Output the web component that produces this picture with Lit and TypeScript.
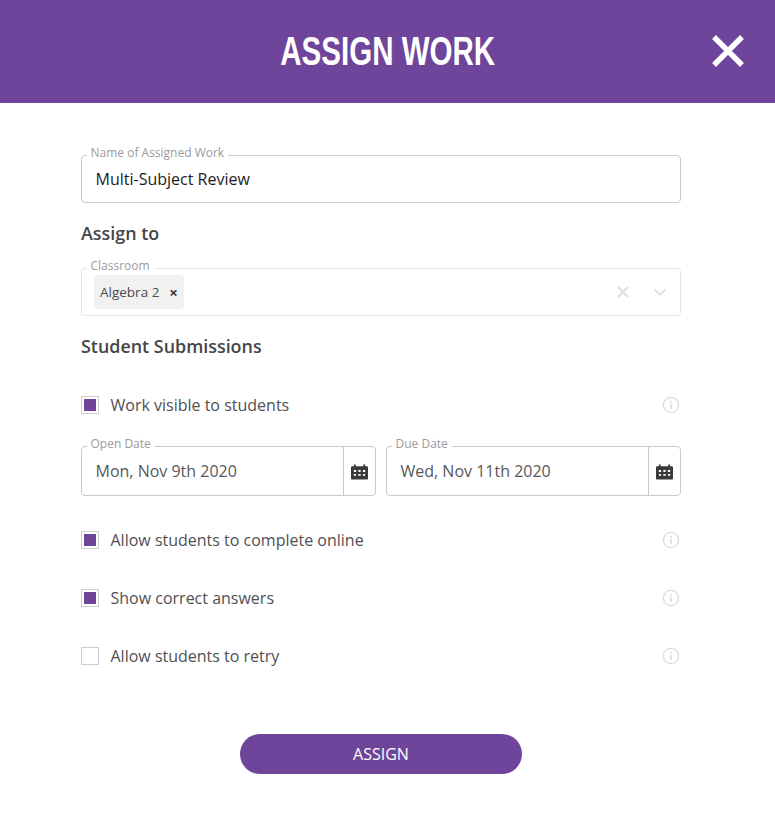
import { css, html, LitElement, svg } from 'lit'
import { customElement } from 'lit/decorators.js'

const closeIcon = svg`<path d="M2 2 L30 30 M30 2 L2 30" stroke="#fff" stroke-width="5.4" fill="none" />`

const infoIcon = html`<svg class="info" width="18" height="18" viewBox="0 0 18 18">
  <circle cx="9" cy="9" r="7.6" fill="none" stroke="#dcdcdc" stroke-width="1.3" />
  <rect x="8.2" y="8" width="1.6" height="5" fill="#dcdcdc" />
  <rect x="8.2" y="5" width="1.6" height="1.7" fill="#dcdcdc" />
</svg>`

const calendarIcon = html`<svg width="17" height="16" viewBox="0 0 18 16">
  <path
    fill="#3a3a3c"
    fill-rule="evenodd"
    d="M3 0h2v2h8V0h2v2h2a1 1 0 0 1 1 1v12a1 1 0 0 1-1 1H1a1 1 0 0 1-1-1V3a1 1 0 0 1 1-1h2V0zM3 6v2h2.4V6H3zm4.8 0v2h2.4V6H7.8zm4.8 0v2H15V6h-2.400zM3 10v2h2.400v-2H3zm4.800 0v2h2.400v-2H7.800zm4.800 0v2H15v-2h-2.400z"
  />
</svg>`

@customElement('app-root')
export class AppRoot extends LitElement {
  static styles = css`
    :host {
      display: block;
      min-height: 813px;
      background: #fff;
      font-family: 'Open Sans', sans-serif;
      color: #4a4a4d;
    }
    .header {
      height: 103px;
      background: #6f459b;
      display: flex;
      align-items: center;
      justify-content: center;
      position: relative;
    }
    .title {
      margin: 0;
      font-family: 'Liberation Sans', sans-serif;
      font-size: 41px;
      font-weight: 700;
      color: #fff;
      white-space: nowrap;
      transform: translateX(0.5px) scaleX(0.72);
    }
    .close {
      position: absolute;
      left: 712px;
      top: 35px;
      width: 32px;
      height: 32px;
      padding: 0;
      border: 0;
      background: none;
    }
    .close svg {
      display: block;
    }
    .body {
      padding: 52px 94px 0 81px;
      display: flex;
      flex-direction: column;
    }
    .field {
      position: relative;
      box-sizing: border-box;
      border: 1px solid #c9c9c9;
      border-radius: 4px;
      display: flex;
      align-items: center;
    }
    .field .label {
      position: absolute;
      left: 4.500px;
      top: -11px;
      padding: 0 4px;
      background: linear-gradient(transparent 10px, #fff 10px);
      font-size: 12px;
      line-height: 16px;
      color: #9b9b9b;
    }
    .name {
      height: 48px;
      padding-left: 13.5px;
      font-size: 16px;
      color: #1c1c1e;
    }
    h2 {
      margin: 0;
      font-size: 17.900px;
      font-weight: 600;
      line-height: 24px;
      color: #45454a;
    }
    .assign-to {
      margin: 18px 0 23px;
    }
    .classroom {
      height: 48px;
      border-color: #e6e6e6;
      padding-left: 12px;
      justify-content: space-between;
    }
    .chip {
      display: flex;
      align-items: center;
      gap: 10px;
      height: 34px;
      padding: 0 6px;
      background: #f1f1f1;
      border-radius: 4px;
      font-size: 13.5px;
      color: #4a4a4d;
    }
    .chip-x {
      font-size: 15px;
      font-weight: 700;
      color: #3a3a3c;
    }
    .select-icons {
      display: flex;
      align-items: center;
      gap: 24px;
      padding-right: 13px;
    }
    .select-icons svg {
      display: block;
    }
    .submissions {
      margin: 18px 0 0;
    }
    .row {
      display: flex;
      align-items: center;
      height: 24px;
      font-size: 16px;
      color: #505053;
    }
    .box {
      box-sizing: border-box;
      width: 18px;
      height: 18px;
      border: 1px solid #cdcdcd;
      padding: 2px;
      margin-right: 11.5px;
    }
    .box span {
      display: block;
      width: 100%;
      height: 100%;
      background: #6f459b;
    }
    .info {
      margin-left: auto;
      margin-right: 1px;
    }
    .visible {
      margin-top: 35px;
    }
    .dates {
      display: grid;
      grid-template-columns: 295px 295px;
      gap: 10px;
      margin-top: 29px;
    }
    .date {
      height: 50px;
      font-size: 16px;
      color: #58585b;
      padding-left: 13.5px;
    }
    .date .cal {
      margin-left: auto;
      width: 32px;
      align-self: stretch;
      border-left: 1px solid #c9c9c9;
      display: flex;
      align-items: center;
      justify-content: center;
      padding-top: 2px;
      box-sizing: border-box;
    }
    .rows {
      display: flex;
      flex-direction: column;
      gap: 34px;
      margin-top: 32px;
    }
    .actions {
      display: flex;
      justify-content: center;
      margin-top: 66px;
    }
    .assign {
      width: 282px;
      height: 40px;
      border: 0;
      border-radius: 20px;
      background: #6f459b;
      color: #fff;
      font-family: inherit;
      font-size: 16px;
      font-weight: 500;
    }
  `

  private checkRow(label: string, checked: boolean, extra = '') {
    return html`<div class="row ${extra}">
      <div class="box">${checked ? html`<span></span>` : ''}</div>
      ${label} ${infoIcon}
    </div>`
  }

  private dateField(label: string, value: string) {
    return html`<div class="field date">
      <span class="label">${label}</span>
      ${value}
      <div class="cal">${calendarIcon}</div>
    </div>`
  }

  protected render(): unknown {
    return html`
      <header class="header">
        <h1 class="title">ASSIGN WORK</h1>
        <button class="close"><svg width="32" height="32" viewBox="0 0 32 32">${closeIcon}</svg></button>
      </header>
      <div class="body">
        <div class="field name">
          <span class="label">Name of Assigned Work</span>
          Multi-Subject Review
        </div>
        <h2 class="assign-to">Assign to</h2>
        <div class="field classroom">
          <span class="label">Classroom</span>
          <div class="chip">Algebra 2 <span class="chip-x">×</span></div>
          <div class="select-icons">
            <svg width="12" height="12" viewBox="0 0 12 12">
              <path d="M1 1 L11 11 M11 1 L1 11" stroke="#e0e0e0" stroke-width="2.4" fill="none" />
            </svg>
            <svg width="14" height="8" viewBox="0 0 14 8">
              <path d="M1.500 1.500 L7 6.500 L12.500 1.500" stroke="#e0e0e0" stroke-width="2" fill="none" />
            </svg>
          </div>
        </div>
        <h2 class="submissions">Student Submissions</h2>
        ${this.checkRow('Work visible to students', true, 'visible')}
        <div class="dates">
          ${this.dateField('Open Date', 'Mon, Nov 9th 2020')}
          ${this.dateField('Due Date', 'Wed, Nov 11th 2020')}
        </div>
        <div class="rows">
          ${this.checkRow('Allow students to complete online', true)}
          ${this.checkRow('Show correct answers', true)}
          ${this.checkRow('Allow students to retry', false)}
        </div>
        <div class="actions"><button class="assign">ASSIGN</button></div>
      </div>
    `
  }
}

declare global {
  interface HTMLElementTagNameMap {
    'app-root': AppRoot
  }
}
